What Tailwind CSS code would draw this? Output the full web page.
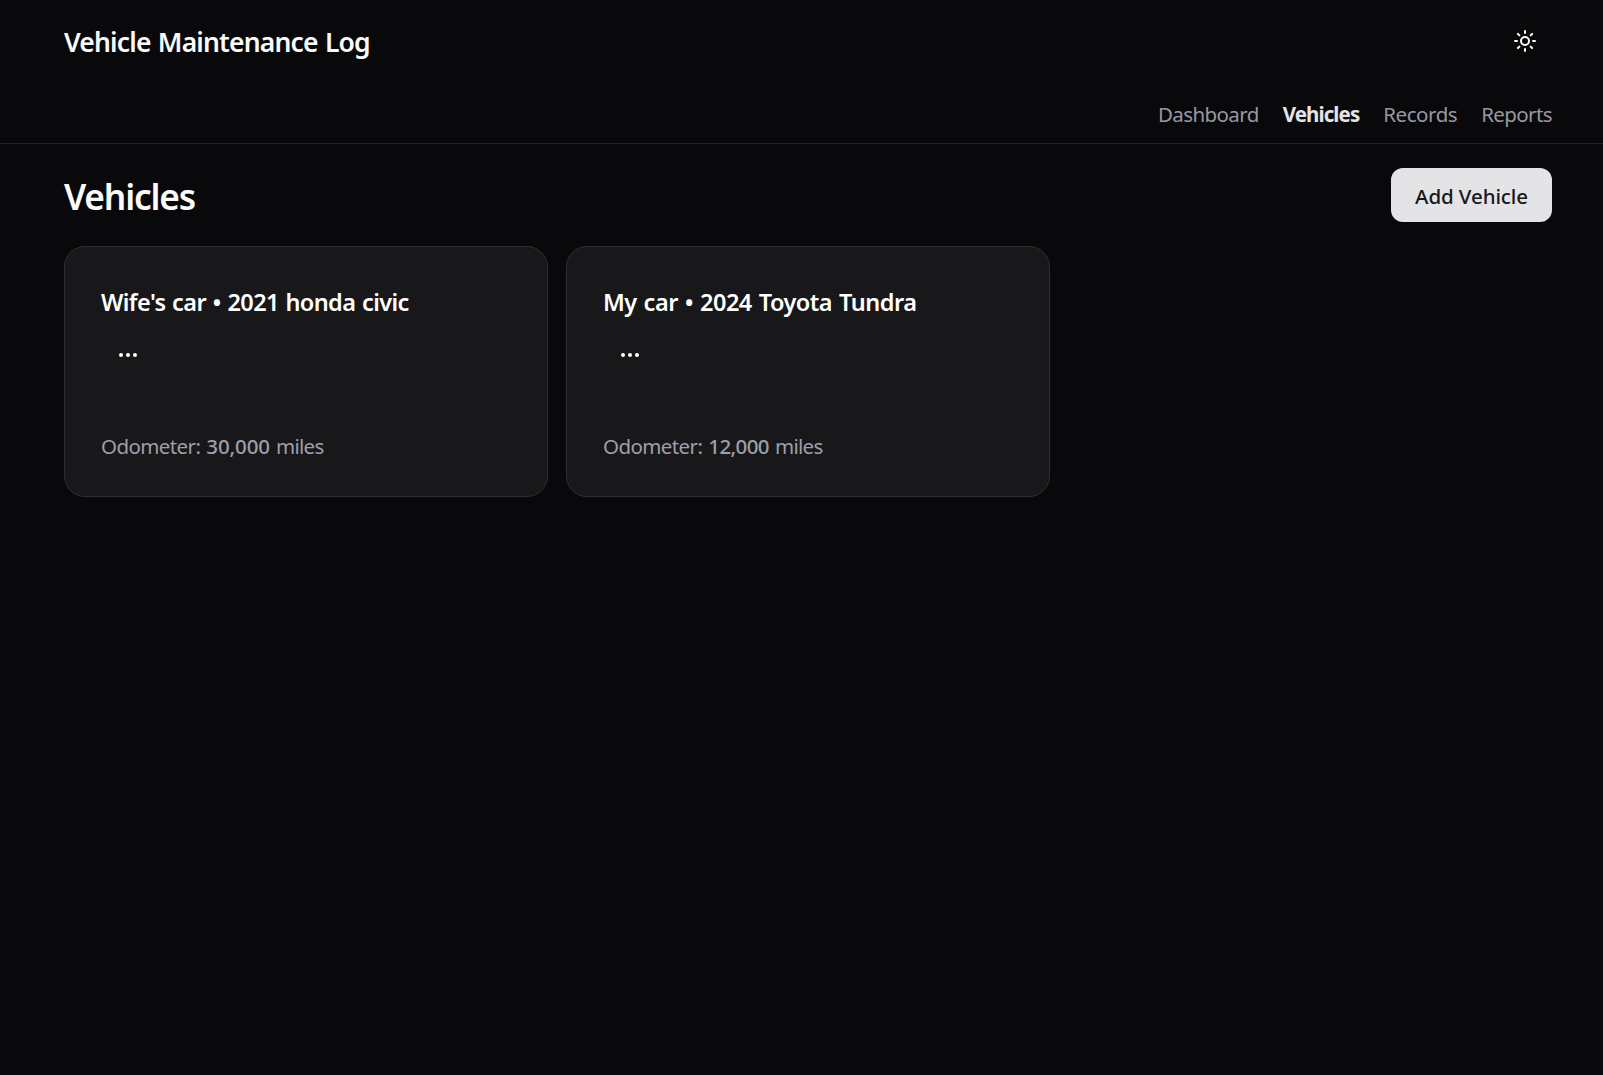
<!DOCTYPE html>
<html lang="en">
<head>
<meta charset="utf-8">
<title>Vehicle Maintenance Log</title>
<script src="https://cdn.jsdelivr.net/npm/@tailwindcss/browser@4"></script>
</head>
<body class="min-h-screen bg-[#09090b] font-['Noto_Sans',sans-serif] text-[#fafafa]">
  <header class="flex h-36 flex-col border-b border-[#242427] pr-[51px] pl-16">
    <div class="flex h-[84px] items-center justify-between">
      <h1 class="text-[26.5px] leading-9 font-semibold tracking-[-0.83px] [word-spacing:1.2px]">Vehicle Maintenance Log</h1>
      <button class="mb-[2px] flex size-[54px] items-center justify-center" aria-label="Toggle theme">
        <svg class="size-6" viewBox="0 0 24 24" fill="none" stroke="currentColor" stroke-width="2" stroke-linecap="round" stroke-linejoin="round">
          <circle cx="12" cy="12" r="4"/>
          <path d="M12 2v2M12 20v2M4.93 4.93l1.41 1.41M17.66 17.66l1.41 1.41M2 12h2M20 12h2M6.34 17.66l-1.41 1.41M19.07 4.93l-1.41 1.41"/>
        </svg>
      </button>
    </div>
    <nav class="mt-[15px] flex justify-end gap-6 text-[20.5px] leading-[30px] text-[#9898a1]">
      <a class="tracking-[-0.6px]">Dashboard</a>
      <a class="font-bold tracking-[-0.9px] text-[#e4e4e7]">Vehicles</a>
      <a class="tracking-[-0.45px]">Records</a>
      <a class="tracking-[-0.6px]">Reports</a>
    </nav>
  </header>
  <main class="flex flex-col gap-6 pt-6 pr-[51px] pl-16">
    <div class="flex items-center justify-between">
      <h2 class="pt-[2px] text-[35.3px] leading-[52px] font-semibold tracking-[-1.2px]">Vehicles</h2>
      <button class="flex h-[54px] w-[161px] items-center justify-center rounded-xl bg-[#e4e4e7] pt-[2px] text-[20.5px] font-medium tracking-[-0.1px] text-[#18181b]">Add Vehicle</button>
    </div>
    <div class="grid grid-cols-3 gap-[18px]">
      <article class="flex h-[251px] flex-col rounded-[21px] border border-[#2f2f31] bg-[#18181a] px-9 pt-[35px]">
        <h3 class="text-[23.5px] leading-10 font-semibold tracking-[-0.6px] text-white [word-spacing:1.1px]">Wife's car • 2021 honda civic</h3>
        <button class="mt-[6px] flex h-[54px] w-[54px] items-center justify-center gap-[2.7px]" aria-label="Vehicle menu">
          <span class="size-[4.3px] rounded-full bg-white"></span><span class="size-[4.3px] rounded-full bg-white"></span><span class="size-[4.3px] rounded-full bg-white"></span>
        </button>
        <p class="mt-[49px] flex gap-[6px] text-[20.5px] leading-[30px] text-[#9f9fa9]"><span class="tracking-[-0.6px]">Odometer:</span><strong class="font-medium tracking-[-0.1px]">30,000</strong><span class="tracking-[-0.7px]">miles</span></p>
      </article>
      <article class="flex h-[251px] flex-col rounded-[21px] border border-[#2f2f31] bg-[#18181a] px-9 pt-[35px]">
        <h3 class="text-[23.5px] leading-10 font-semibold tracking-[-0.5px] text-white [word-spacing:1.3px]">My car • 2024 Toyota Tundra</h3>
        <button class="mt-[6px] flex h-[54px] w-[54px] items-center justify-center gap-[2.7px]" aria-label="Vehicle menu">
          <span class="size-[4.3px] rounded-full bg-white"></span><span class="size-[4.3px] rounded-full bg-white"></span><span class="size-[4.3px] rounded-full bg-white"></span>
        </button>
        <p class="mt-[49px] flex gap-[6px] text-[20.5px] leading-[30px] text-[#9f9fa9]"><span class="tracking-[-0.6px]">Odometer:</span><strong class="font-medium tracking-[-0.6px]">12,000</strong><span class="tracking-[-0.7px]">miles</span></p>
      </article>
    </div>
  </main>
</body>
</html>
